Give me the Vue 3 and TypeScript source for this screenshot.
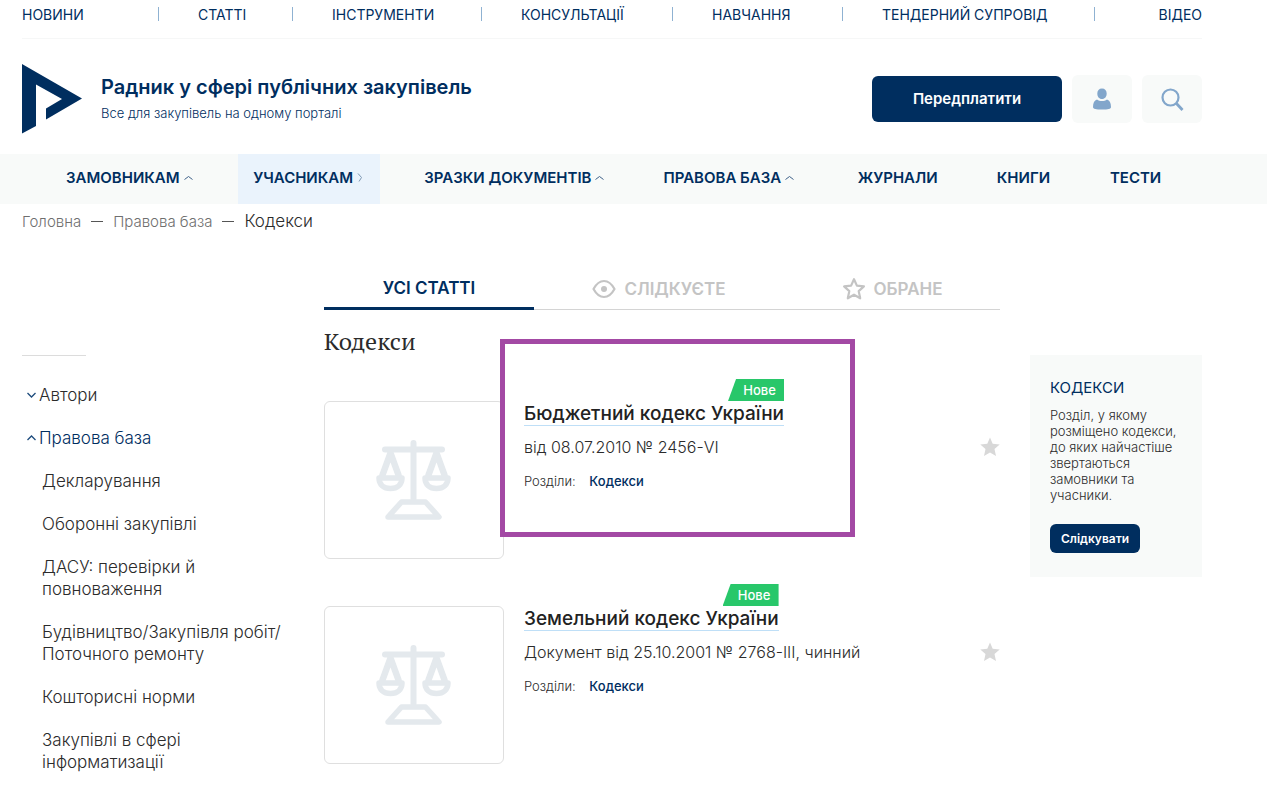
<script setup lang="ts">
interface MenuItem {
  label: string
  arrow?: 'up' | 'right'
}

interface Article {
  title: string
  details: string
  section: string
  highlighted: boolean
}

const topLinks: string[] = [
  'НОВИНИ',
  'СТАТТІ',
  'ІНСТРУМЕНТИ',
  'КОНСУЛЬТАЦІЇ',
  'НАВЧАННЯ',
  'ТЕНДЕРНИЙ СУПРОВІД',
  'ВІДЕО',
]

const menu: MenuItem[] = [
  { label: 'ЗАМОВНИКАМ', arrow: 'up' },
  { label: 'УЧАСНИКАМ', arrow: 'right' },
  { label: 'ЗРАЗКИ ДОКУМЕНТІВ', arrow: 'up' },
  { label: 'ПРАВОВА БАЗА', arrow: 'up' },
  { label: 'ЖУРНАЛИ' },
  { label: 'КНИГИ' },
  { label: 'ТЕСТИ' },
]

const topics: string[] = [
  'Декларування',
  'Оборонні закупівлі',
  'ДАСУ: перевірки й\nповноваження',
  'Будівництво/Закупівля робіт/\nПоточного ремонту',
  'Кошторисні норми',
  'Закупівлі в сфері\nінформатизації',
]

const articles: Article[] = [
  {
    title: 'Бюджетний кодекс України',
    details: 'від 08.07.2010 № 2456-VI',
    section: 'Кодекси',
    highlighted: true,
  },
  {
    title: 'Земельний кодекс України',
    details: 'Документ від 25.10.2001 № 2768-III, чинний',
    section: 'Кодекси',
    highlighted: false,
  },
]

const sectionNote =
  'Розділ, у якому\nрозміщено кодекси,\nдо яких найчастіше\nзвертаються\nзамовники та\nучасники.'
</script>

<template>
  <div class="page">
    <header class="wrap">
      <nav class="top-nav" aria-label="Розділи порталу">
        <a v-for="link in topLinks" :key="link" href="#"><span>{{ link }}</span></a>
      </nav>

      <div class="brand-row">
        <a class="brand" href="#">
          <svg class="logo" width="60" height="70" viewBox="0 0 60 70" aria-hidden="true">
            <path d="M0 0 60 34.500 24 55.500V44.500L40 35 14 20.500V62L0 69.500Z" fill="#002e5f" />
          </svg>
          <span class="brand-text">
            <strong>Радник у сфері публічних закупівель</strong>
            <span>Все для закупівель на одному порталі</span>
          </span>
        </a>
        <div class="actions">
          <button class="subscribe" type="button">Передплатити</button>
          <button class="icon-button" type="button" aria-label="Профіль">
            <svg width="20" height="22" viewBox="0 0 20 22" aria-hidden="true">
              <path
                d="M10 .5c3 0 4.700 2 4.700 5S13 11 10 11 5.300 8.500 5.300 5.500 7 .5 10 .5ZM5 11.500c1.500 1.100 3 1.500 5 1.500s3.500-.4 5-1.500c2.700.9 4 3.500 4 7.500 0 2-3 2.500-9 2.500S1 21 1 19c0-4 1.300-6.600 4-7.500Z"
                fill="#82a6cb"
              />
            </svg>
          </button>
          <button class="icon-button" type="button" aria-label="Пошук">
            <svg width="24" height="24" viewBox="0 0 24 24" fill="none" stroke="#82a6cb" aria-hidden="true">
              <circle cx="10.500" cy="10.500" r="8" stroke-width="2.200" />
              <path d="m16 16 6.500 7" stroke-width="2.800" />
            </svg>
          </button>
        </div>
      </div>
    </header>

    <div class="menu-bar">
      <nav class="wrap menu" aria-label="Головне меню">
        <a v-for="item in menu" :key="item.label" href="#" :class="{ active: item.arrow === 'right' }">
          {{ item.label }}
          <svg v-if="item.arrow === 'up'" width="9" height="5" viewBox="0 0 9 5" aria-hidden="true">
            <path d="m.5 4.500 4-3 4 3" fill="none" stroke="#3f6088" />
          </svg>
          <svg v-if="item.arrow === 'right'" width="6" height="9" viewBox="0 0 6 9" aria-hidden="true">
            <path d="m1 .5 3.500 4L2 8.500" fill="none" stroke="#7d97b3" />
          </svg>
        </a>
      </nav>
    </div>

    <nav class="wrap crumbs" aria-label="Навігаційний ланцюжок">
      <a href="#">Головна</a>
      <i></i>
      <a href="#">Правова база</a>
      <i></i>
      <span>Кодекси</span>
    </nav>

    <div class="wrap columns">
      <nav class="side" aria-label="Рубрики">
        <a class="side-top" href="#">
          <svg width="9" height="6" viewBox="0 0 9 6" aria-hidden="true">
            <path d="m.5 1 4 4 4-4" fill="none" stroke="#1d4b7c" stroke-width="1.300" />
          </svg>
          Автори
        </a>
        <a class="side-top open" href="#">
          <svg width="9" height="6" viewBox="0 0 9 6" aria-hidden="true">
            <path d="m.5 5 4-4 4 4" fill="none" stroke="#1d4b7c" stroke-width="1.300" />
          </svg>
          Правова база
        </a>
        <ul>
          <li v-for="topic in topics" :key="topic"><a href="#">{{ topic }}</a></li>
        </ul>
      </nav>

      <main>
        <div class="tabs">
          <button class="current" type="button">УСІ СТАТТІ</button>
          <button type="button">
            <svg width="24" height="20" viewBox="0 0 24 20" fill="none" stroke="#c4c4c4" aria-hidden="true">
              <path d="M1.500 10C4.500 4.500 8 2 12 2s7.500 2.500 10.500 8C19.500 15.500 16 18 12 18S4.500 15.500 1.500 10Z" stroke-width="2.200" stroke-linejoin="round" />
              <circle cx="12" cy="10" r="3" fill="#c4c4c4" stroke="none" />
            </svg>
            СЛІДКУЄТЕ
          </button>
          <button type="button">
            <svg width="24" height="24" viewBox="0 0 24 24" fill="none" stroke="#c4c4c4" aria-hidden="true">
              <path d="m12 2.200 2.900 6.400 7 .8-5.200 4.700 1.500 7.200-6.200-3.600-6.200 3.600 1.500-7.200-5.200-4.700 7-.8Z" stroke-width="2.200" stroke-linejoin="round" />
            </svg>
            ОБРАНЕ
          </button>
        </div>

        <h1>Кодекси</h1>

        <article v-for="article in articles" :key="article.title">
          <a class="thumb" href="#" :aria-label="article.title">
            <svg width="78" height="82" viewBox="0 0 78 82" fill="none" stroke="#e4e9ed" stroke-linecap="round" stroke-linejoin="round" aria-hidden="true">
              <path d="M38.500 4v56M10 10.500h57" stroke-width="6" />
              <path d="m15.500 14-8 22M15.500 14l8 22M61.500 14l-8 22M61.500 14l8 22" stroke-width="6.500" />
              <path d="M4 39h23c0 6.500-4.500 10.500-11.500 10.500S4 45.500 4 39ZM50 39h23c0 6.500-4.500 10.500-11.500 10.500S50 45.500 50 39Z" stroke-width="5.500" />
              <path d="M26.500 63h24L64 78H13Z" stroke-width="5.500" />
            </svg>
          </a>
          <div class="article-text">
            <div class="title-box">
              <span class="badge">Нове</span>
              <h2><a href="#">{{ article.title }}</a></h2>
            </div>
            <p class="details">{{ article.details }}</p>
            <p class="sections">Розділи: <a href="#">{{ article.section }}</a></p>
          </div>
          <button class="favourite" type="button" aria-label="Додати в обране">
            <svg width="20" height="20" viewBox="0 0 20 20" aria-hidden="true">
              <path d="m10 .5 2.700 6.300 7 .7-5.200 4.600 1.500 6.900-6-3.600L4 19l1.500-6.900L.3 7.500l7-.7Z" fill="#d8d8d8" />
            </svg>
          </button>
          <div v-if="article.highlighted" class="marker"></div>
        </article>
      </main>

      <aside>
        <h3>КОДЕКСИ</h3>
        <p>{{ sectionNote }}</p>
        <button type="button">Слідкувати</button>
      </aside>
    </div>
  </div>
</template>

<style>
body {
  margin: 0;
  background: #fff;
}
</style>

<style scoped>
.page {
  font-family: Inter, "Open Sans", sans-serif;
  font-size: 16px;
  color: #2b2b2b;
}

.page * {
  box-sizing: border-box;
}

a {
  color: inherit;
  text-decoration: none;
}

button {
  padding: 0;
  border: 0;
  font-family: inherit;
  cursor: pointer;
}

svg {
  display: block;
  flex: none;
}

.wrap {
  padding: 0 65px 0 22px;
}

.top-nav {
  display: grid;
  grid-template-columns: 136fr 134fr 189fr 191fr 170fr 252fr 108fr;
  height: 39px;
  padding-top: 7px;
  border-bottom: 1px solid #f6f7f7;
  color: #002e5f;
  font-size: 14px;
  line-height: 16px;
  white-space: nowrap;
}

.top-nav a {
  height: 14px;
  padding-left: 39px;
  border-left: 1px solid #8fb2d2;
}

.top-nav a:first-child {
  padding-left: 0;
  border-left: 0;
}

.top-nav a:last-child {
  text-align: right;
}

.brand-row {
  display: flex;
  align-items: center;
  justify-content: space-between;
  height: 115px;
  padding-top: 5px;
}

.brand {
  display: flex;
  align-items: center;
  gap: 19px;
  color: #002e5f;
}

.brand-text {
  display: flex;
  flex-direction: column;
  gap: 4px;
  padding-bottom: 2px;
}

.brand-text strong {
  font-size: 20px;
  font-weight: 600;
  line-height: 26px;
}

.brand-text span {
  font-size: 13px;
  line-height: 18px;
  font-weight: 300;
}

.actions {
  display: flex;
  align-items: center;
  gap: 10px;
}

.subscribe {
  width: 190px;
  height: 46px;
  padding-bottom: 2px;
  border-radius: 6px;
  background: #002e5f;
  color: #fff;
  font-size: 15px;
  font-weight: 600;
}

.icon-button {
  display: flex;
  align-items: center;
  justify-content: center;
  width: 60px;
  height: 48px;
  border-radius: 6px;
  background: #f8faf9;
}

.menu-bar {
  background: #f8faf9;
}

.menu {
  display: grid;
  grid-template-columns: 187fr 171fr 239fr 194fr 139fr 113fr 107fr;
  padding-left: 51px;
  color: #002e5f;
  font-size: 15px;
  font-weight: 600;
  white-space: nowrap;
}

.menu a {
  display: flex;
  align-items: center;
  gap: 4px;
  height: 50px;
  padding: 0 15px 3px;
}

.menu a.active {
  margin-right: 29px;
  background: #eaf3fc;
}

.crumbs {
  display: flex;
  align-items: center;
  gap: 10px;
  height: 36px;
  padding-bottom: 2px;
  color: #6f6f6f;
  font-size: 15px;
  font-weight: 300;
}

.crumbs i {
  width: 12px;
  height: 1px;
  background: #555;
}

.crumbs span {
  color: #2b2b2b;
  font-size: 17px;
}

.columns {
  display: grid;
  grid-template-columns: 272px minmax(0, 1fr) 172px;
  column-gap: 30px;
  align-items: start;
}

.side {
  display: flex;
  flex-direction: column;
  gap: 21px;
  margin-top: 115px;
  font-size: 17px;
  font-weight: 300;
  line-height: 22px;
}

.side::before {
  content: "";
  width: 64px;
  height: 1px;
  margin-bottom: 7px;
  background: #dcdcdc;
}

.side-top {
  display: flex;
  align-items: center;
  gap: 3px;
  padding-left: 5px;
}

.side-top.open {
  color: #002e5f;
}

.side ul {
  display: flex;
  flex-direction: column;
  gap: 21px;
  margin: 0;
  padding: 0 0 0 20px;
  list-style: none;
  white-space: pre-line;
}

main {
  padding-top: 26px;
}

.tabs {
  display: grid;
  grid-template-columns: 210fr 250fr 216fr;
  border-bottom: 1px solid #d4d4d4;
}

.tabs button {
  display: flex;
  align-items: center;
  justify-content: center;
  gap: 8px;
  height: 43px;
  padding-top: 2px;
  background: none;
  color: #c4c4c4;
  font-size: 17px;
  font-weight: 600;
}

.tabs .current {
  height: 44px;
  margin-bottom: -1px;
  border-bottom: 3px solid #002e5f;
  color: #002e5f;
}

h1 {
  margin: 15px 0 22px;
  font-family: "PT Serif", "Liberation Serif", serif;
  font-size: 24px;
  font-weight: 400;
  line-height: 32px;
}

article {
  position: relative;
  display: flex;
  align-items: flex-start;
  margin-bottom: 25px;
}

.thumb {
  display: flex;
  align-items: center;
  justify-content: center;
  width: 180px;
  height: 158px;
  margin-top: 22px;
  border: 1px solid #dfdfdf;
  border-radius: 6px;
}

.article-text {
  flex: 1;
  padding-left: 20px;
}

.title-box {
  display: flex;
  flex-direction: column;
  width: fit-content;
}

.badge {
  align-self: flex-end;
  width: 56px;
  padding-left: 7px;
  background: #28c76a;
  clip-path: polygon(8px 0, 100% 0, 100% 100%, 0 100%);
  color: #fff;
  font-size: 13px;
  font-weight: 500;
  line-height: 22px;
  text-align: center;
}

h2 {
  margin: 0;
  padding-top: 2px;
  border-bottom: 1px solid #bfdff7;
  color: #222;
  font-size: 19px;
  font-weight: 500;
  line-height: 22px;
}

.details {
  margin: 10px 0 13px;
  font-size: 16px;
  font-weight: 300;
  line-height: 22px;
}

.sections {
  margin: 0;
  font-size: 13px;
  font-weight: 300;
  line-height: 20px;
}

.sections a {
  margin-left: 10px;
  color: #002e5f;
  font-weight: 500;
}

.favourite {
  margin-top: 58px;
  background: none;
}

.marker {
  position: absolute;
  top: -40px;
  left: 176px;
  width: 355px;
  height: 198px;
  border: 5px solid #a349a4;
  pointer-events: none;
}

aside {
  margin-top: 115px;
  padding: 22px 20px 24px;
  background: #f8faf9;
}

aside h3 {
  margin: 0 0 8px;
  color: #002e5f;
  font-size: 15px;
  font-weight: 400;
  line-height: 22px;
}

aside p {
  margin: 0 0 21px;
  font-size: 13px;
  font-weight: 300;
  line-height: 16px;
  white-space: pre-line;
}

aside button {
  display: block;
  height: 29px;
  padding: 0 11px;
  border-radius: 6px;
  background: #002e5f;
  color: #fff;
  font-size: 12px;
  font-weight: 600;
}
</style>
